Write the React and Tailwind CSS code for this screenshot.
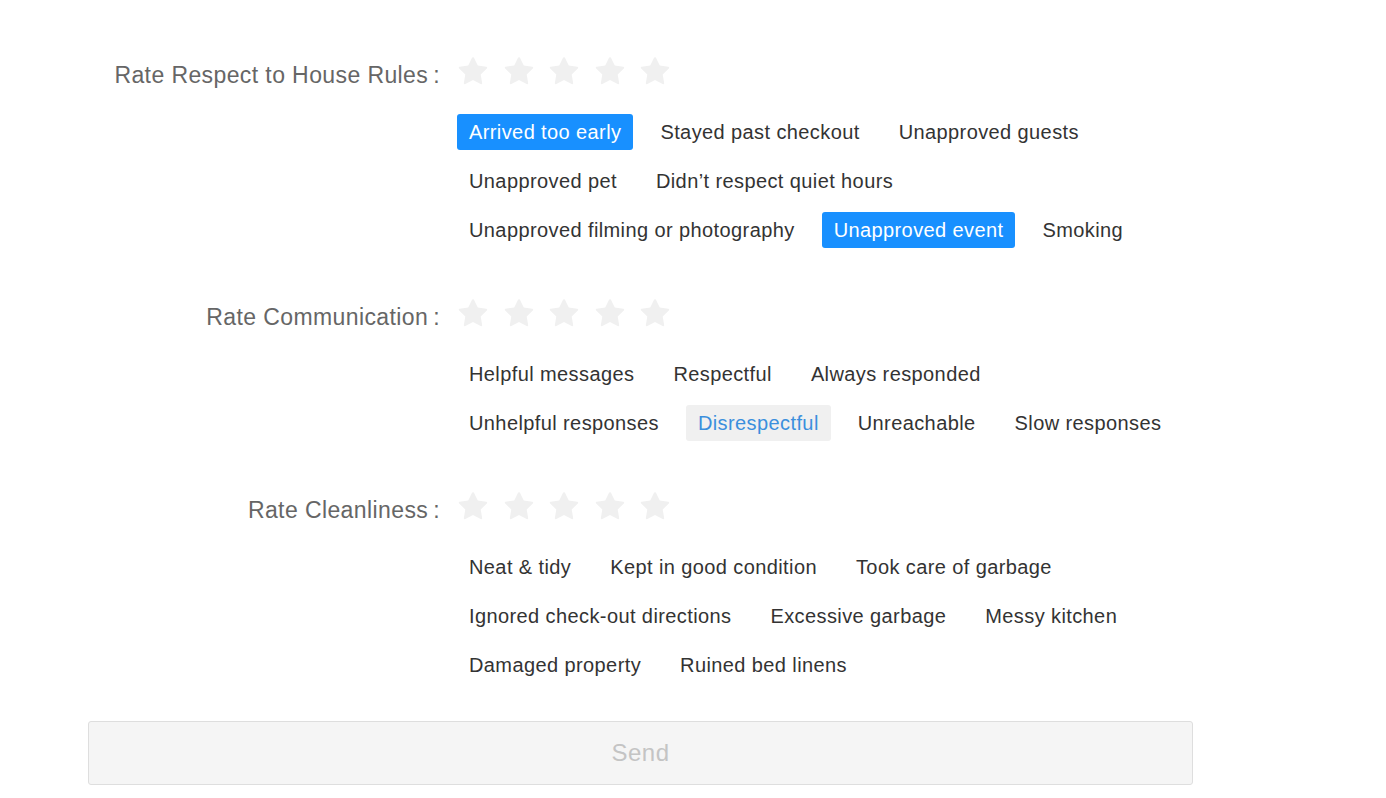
import React from 'react';

const sections = [
  {
    label: 'Rate Respect to House Rules',
    rows: [
      ['Arrived too early', 'Stayed past checkout', 'Unapproved guests'],
      ['Unapproved pet', 'Didn’t respect quiet hours'],
      ['Unapproved filming or photography', 'Unapproved event', 'Smoking'],
    ],
  },
  {
    label: 'Rate Communication',
    rows: [
      ['Helpful messages', 'Respectful', 'Always responded'],
      ['Unhelpful responses', 'Disrespectful', 'Unreachable', 'Slow responses'],
    ],
  },
  {
    label: 'Rate Cleanliness',
    rows: [
      ['Neat & tidy', 'Kept in good condition', 'Took care of garbage'],
      ['Ignored check-out directions', 'Excessive garbage', 'Messy kitchen'],
      ['Damaged property', 'Ruined bed linens'],
    ],
  },
];

const checked = ['Arrived too early', 'Unapproved event'];
const hovered = 'Disrespectful';

const Star = () => (
  <svg viewBox="64 64 896 896" className="w-[30px] h-[30px]" fill="#f0f0f0">
    <path d="M908.1 353.1l-253.9-36.9L540.7 86.1c-3.1-6.3-8.2-11.4-14.5-14.5-15.8-7.8-35-1.3-42.9 14.5L369.8 316.2l-253.9 36.9c-7 1-13.4 4.3-18.3 9.3a32.05 32.05 0 00.6 45.3l183.7 179.1-43.4 252.9a31.95 31.95 0 0046.4 33.7L512 754l227.1 119.4c6.2 3.3 13.4 4.4 20.3 3.2 17.4-3 29.1-19.5 26.1-36.9l-43.4-252.9 183.7-179.1c5-4.9 8.3-11.3 9.3-18.3 2.7-17.5-9.5-33.7-27-36.3z" />
  </svg>
);

const Tag = ({ text }) => {
  let cls = 'text-[#333]';
  if (checked.includes(text)) cls = 'bg-[#1890ff] text-white';
  else if (text === hovered) cls = 'bg-[#f0f0f0] text-[#3b8fdd]';
  return (
    <span className={`h-[36px] leading-[36px] px-[12px] rounded-[3px] whitespace-nowrap ${cls}`}>
      {text}
    </span>
  );
};

export default function App() {
  return (
    <div
      className="min-h-screen bg-white pt-[52px]"
      style={{ fontFamily: '"Liberation Sans", Arial, sans-serif' }}
    >
      {sections.map((section, i) => (
        <div key={section.label} className={`flex ${i > 0 ? 'mt-[46px]' : ''}`}>
          <div className="w-[442px] shrink-0 h-[46px] flex items-center justify-end text-[23px] tracking-[0.4px] text-[#666]">
            {section.label}
            <span className="ml-[5px] mr-[2px]">:</span>
          </div>

          <div className="pl-[15px]">
            {/* Stars */}
            <div className="h-[46px] flex items-center gap-[15.5px] pl-[1px] -mt-[3px]">
              {[0, 1, 2, 3, 4].map(n => <Star key={n} />)}
            </div>

            {/* Tags */}
            <div className="mt-[19px] flex flex-col gap-[13px] text-[20px] tracking-[0.4px]">
              {section.rows.map((row, r) => (
                <div key={r} className="flex gap-[15px]">
                  {row.map(t => <Tag key={t} text={t} />)}
                </div>
              ))}
            </div>
          </div>
        </div>
      ))}

      <div className="pl-[88px] mt-[38px]">
        <button className="w-[1105px] h-[64px] bg-[#f5f5f5] border border-[#dedede] rounded-[3px] text-[24px] tracking-[0.5px] text-[#c4c4c4]">
          Send
        </button>
      </div>
    </div>
  );
}
